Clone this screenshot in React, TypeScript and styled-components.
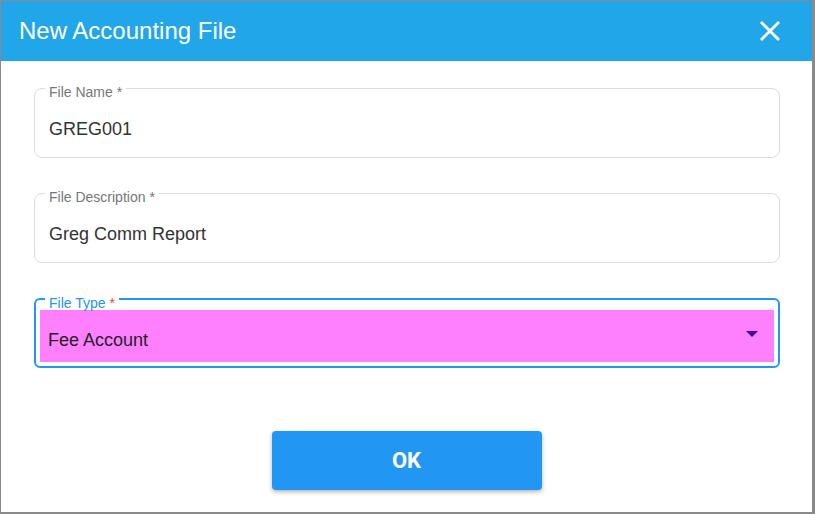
import React from 'react'
import styled, { createGlobalStyle } from 'styled-components'

const GlobalStyle = createGlobalStyle`
  html, body {
    margin: 0;
    padding: 0;
    background: #8a8a8a;
  }
  body {
    font-family: "Liberation Sans", Arial, sans-serif;
  }
`

export const Page = styled.div`
  width: 815px;
  height: 514px;
  padding: 1px 3px 1px 1px;
  box-sizing: border-box;
`

export const Dialog = styled.section`
  width: 811px;
  height: 511px;
  background: #fff;
  display: flex;
  flex-direction: column;
`

export const Header = styled.header`
  height: 60px;
  flex-shrink: 0;
  background: #21a6e9;
  display: flex;
  align-items: center;
  justify-content: space-between;
  padding: 0 31px 0 18px;
`

export const Title = styled.h1`
  margin: 0;
  font-family: "Liberation Sans", Arial, sans-serif;
  font-weight: 400;
  font-size: 24px;
  color: #fff;
`

export const CloseButton = styled.button`
  width: 22px;
  height: 22px;
  padding: 0;
  border: 0;
  background: transparent;
  display: flex;
  align-items: center;
  justify-content: center;
  cursor: pointer;
`

export const Body = styled.div`
  display: flex;
  flex-direction: column;
  gap: 23px;
  padding: 15px 32px 0 33px;
`

export const Field = styled.fieldset<{ $focused?: boolean }>`
  margin: ${(p) => (p.$focused ? '1px 0 0' : '0')};
  min-inline-size: 0;
  padding: 0 ${(p) => (p.$focused ? '4px' : '14px')} ${(p) => (p.$focused ? '4px' : '0')};
  border: ${(p) => (p.$focused ? '2px solid #2196f3' : '1px solid #dcdcdc')};
  border-radius: ${(p) => (p.$focused ? '6px' : '8px')};
`

export const Legend = styled.legend<{ $focused?: boolean }>`
  margin-left: ${(p) => (p.$focused ? '5px' : '-4px')};
  padding: 8px 4px 0;
  font-size: 14px;
  line-height: 16px;
  color: ${(p) => (p.$focused ? '#2196f3' : '#777')};
`

export const Required = styled.span<{ $focused?: boolean }>`
  color: ${(p) => (p.$focused ? '#f44336' : 'inherit')};
`

export const Value = styled.div`
  height: 57px;
  padding-top: 18px;
  box-sizing: border-box;
  font-size: 18px;
  line-height: 22px;
  color: #333;
`

export const Select = styled.div`
  height: 52px;
  margin-top: -1px;
  background: #ff80ff;
  display: flex;
  align-items: center;
  justify-content: space-between;
  padding: 8px 16px 0 8px;
  box-sizing: border-box;
  font-size: 18px;
  color: #222;
`

export const Arrow = styled.span`
  width: 0;
  height: 0;
  border-left: 6px solid transparent;
  border-right: 6px solid transparent;
  border-top: 6px solid #40009c;
  margin-top: -12px;
`

export const Footer = styled.div`
  display: flex;
  justify-content: center;
  padding: 63px 0 0 0;
`

export const Button = styled.button`
  width: 270px;
  height: 59px;
  border: 0;
  border-radius: 4px;
  background: #2196f3;
  color: #fff;
  font-family: Roboto, "Liberation Sans", sans-serif;
  font-weight: 700;
  font-size: 22px;
  box-shadow: 0 2px 4px rgba(0, 0, 0, 0.3);
  cursor: pointer;
`

const TextField = ({ label, value }: { label: string; value: string }) => (
  <Field>
    <Legend>
      {label} <Required>*</Required>
    </Legend>
    <Value>{value}</Value>
  </Field>
)

export default function App() {
  return (
    <>
      <GlobalStyle />
      <Page>
        <Dialog>
          <Header>
            <Title>New Accounting File</Title>
            <CloseButton aria-label="close">
              <svg width="20" height="20" viewBox="0 0 20 20">
                <path d="M2 2 L18 18 M18 2 L2 18" stroke="#fff" strokeWidth="2.8" strokeLinecap="square" />
              </svg>
            </CloseButton>
          </Header>
          <Body>
            <TextField label="File Name" value="GREG001" />
            <TextField label="File Description" value="Greg Comm Report" />
            <Field $focused>
              <Legend $focused>
                File Type <Required $focused>*</Required>
              </Legend>
              <Select>
                <span>Fee Account</span>
                <Arrow />
              </Select>
            </Field>
          </Body>
          <Footer>
            <Button>OK</Button>
          </Footer>
        </Dialog>
      </Page>
    </>
  )
}
